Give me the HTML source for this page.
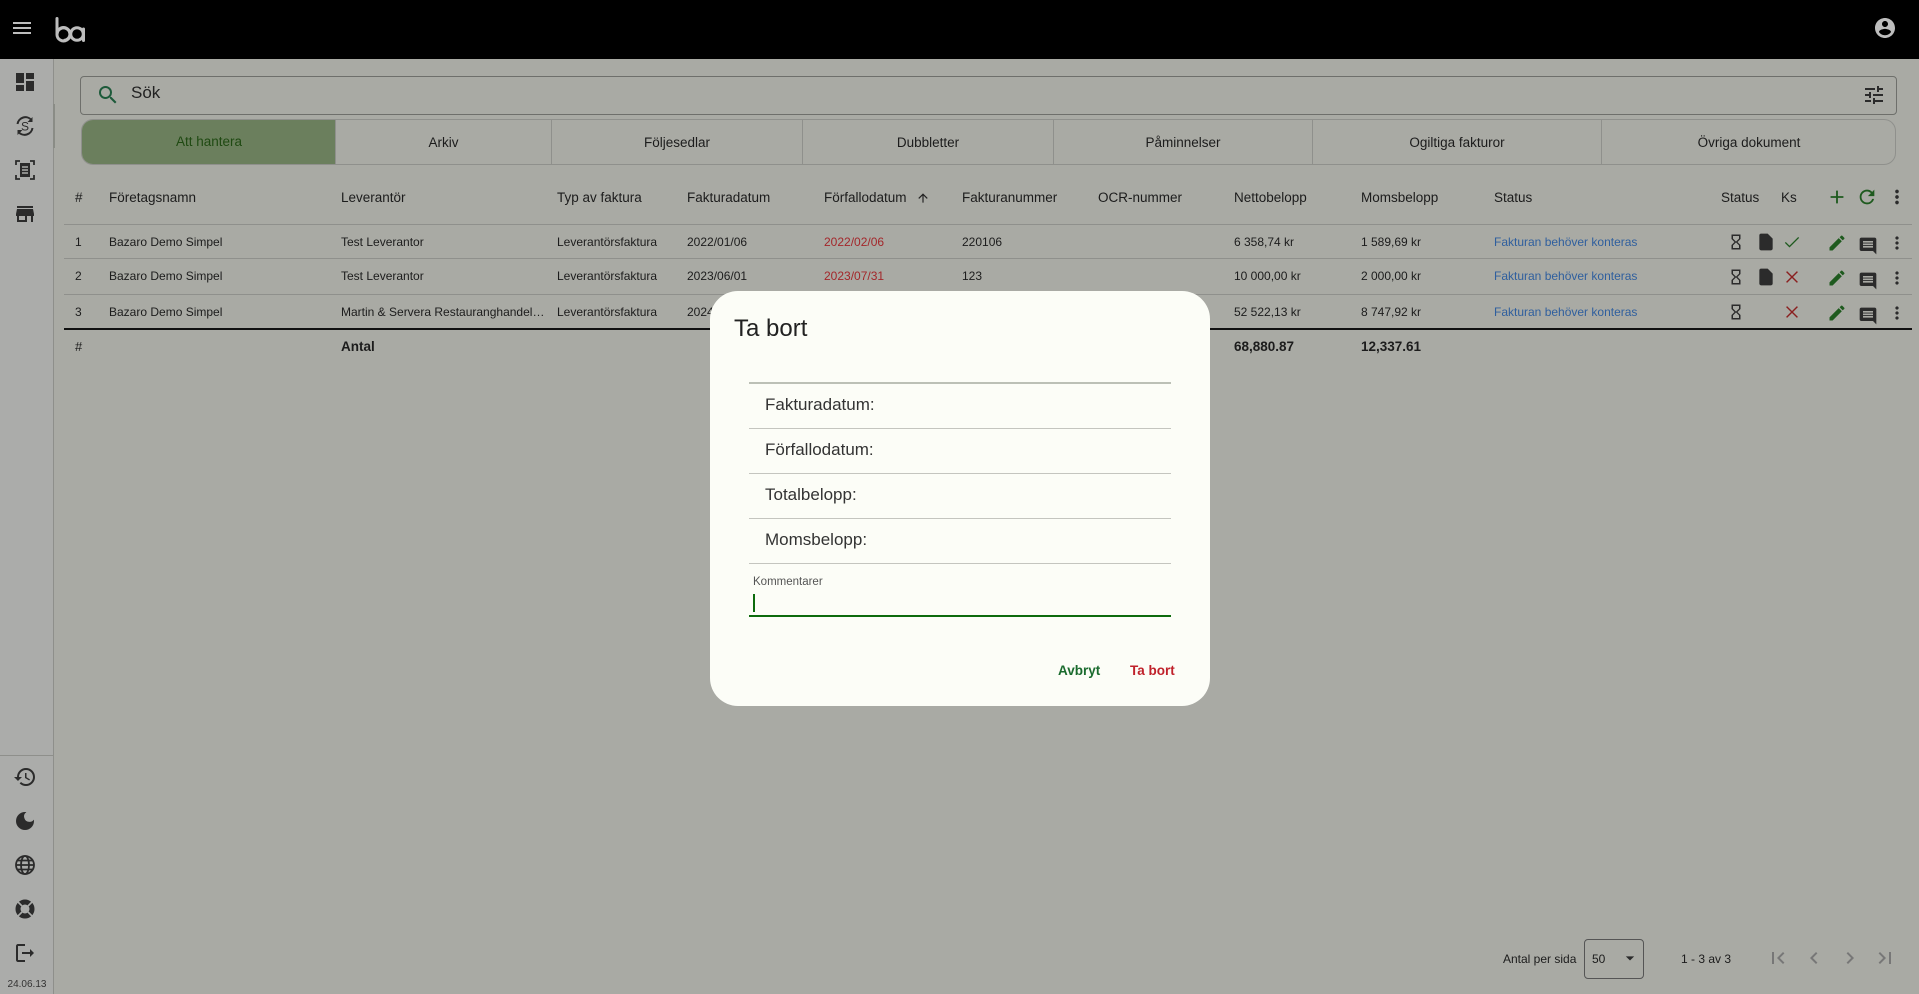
<!DOCTYPE html>
<html><head><meta charset="utf-8"><style>
*{box-sizing:border-box;margin:0;padding:0}
body{width:1919px;height:994px;overflow:hidden;background:#a9aaa4;font-family:"Liberation Sans",Arial,sans-serif;color:#1c1c1c;position:relative}
.a{position:absolute}
svg{display:block}
.hdr{left:0;top:0;width:1919px;height:59px;background:#000}
.side{left:0;top:59px;width:54px;height:935px;background:#abacaa;border-right:1px solid #8e8f8b}
.th{font-size:13.5px;top:190px;white-space:nowrap}
.td{font-size:12px;white-space:nowrap}
.line{height:1px;background:#8f908c;left:64px;width:1848px}
.tab{top:120px;height:45px;line-height:45px;text-align:center;font-size:13.5px;border-left:1px solid #8f908c}
.lab{left:765px;font-size:17px;color:#333}
.dl{left:749px;width:422px;height:1px;background:#c4c5bf}
</style></head><body>
<div class="a hdr"></div>
<svg class="a" style="left:10px;top:16px" width="24" height="24" viewBox="0 0 24 24"><path fill="#bdbdbd" d="M3 18h18v-2H3v2zm0-5h18v-2H3v2zm0-7v2h18V6H3z"/></svg>
<svg class="a" style="left:54px;top:17px" width="34" height="26" viewBox="0 0 34 26"><g fill="none" stroke="#bdbdbd" stroke-width="3"><path d="M3 1.5v16" stroke-linecap="round"/><path d="M3 17.5a6.5 6.5 0 1 0 0-0.1"/><path d="M3 17a6.5 6.5 0 0 1 13 0 6.5 6.5 0 0 1 -6.5 6.5"/><circle cx="23" cy="17" r="6.3"/><path d="M29.5 12v11.5" stroke-linecap="round"/></g></svg>
<svg class="a" style="left:1873px;top:16px" width="24" height="24" viewBox="0 0 24 24"><path fill="#bdbdbd" d="M12 2C6.48 2 2 6.48 2 12s4.48 10 10 10 10-4.48 10-10S17.52 2 12 2zm0 3c1.66 0 3 1.34 3 3s-1.34 3-3 3-3-1.34-3-3 1.34-3 3-3zm0 14.2c-2.5 0-4.71-1.28-6-3.22.03-1.99 4-3.08 6-3.08 1.99 0 5.970 1.09 6 3.08-1.29 1.94-3.5 3.22-6 3.22z"/></svg>

<div class="a side"></div>
<div class="a" style="left:53px;top:104px;width:2px;height:44px;background:#8a8c86"></div>
<svg class="a" style="left:13px;top:70px" width="24" height="24" viewBox="0 0 24 24"><path fill="#2b2b2b" d="M3 13h8V3H3v10zm0 8h8v-6H3v6zm10 0h8V11h-8v10zm0-18v6h8V3h-8z"/></svg>
<svg class="a" style="left:13px;top:114px" width="24" height="24" viewBox="0 0 24 24"><g fill="none" stroke="#2b2b2b" stroke-width="2"><path d="M4.5 10a8 8 0 0 1 14-4M19.5 14a8 8 0 0 1-14 4"/></g><path fill="#2b2b2b" d="M19.5 3v5h-5zM4.5 21v-5h5z"/><text x="12" y="16.5" text-anchor="middle" font-size="12" font-family="Liberation Sans" fill="#2b2b2b">S</text></svg>
<svg class="a" style="left:13px;top:158px" width="24" height="24" viewBox="0 0 24 24"><path fill="none" stroke="#2b2b2b" stroke-width="1.8" d="M3 7V3h4M17 3h4v4M21 17v4h-4M7 21H3v-4"/><rect x="7" y="5" width="10" height="14" fill="#2b2b2b"/><path stroke="#abacaa" stroke-width="1.4" d="M9 9h6M9 12h6M9 15h6"/></svg>
<svg class="a" style="left:13px;top:202px" width="24" height="24" viewBox="0 0 24 24"><path fill="#2b2b2b" d="M20 4H4v2h16V4zm1 10v-2l-1-5H4l-1 5v2h1v6h10v-6h4v6h2v-6h1zm-9 4H6v-4h6v4z"/></svg>
<div class="a" style="left:0;top:755px;width:54px;height:1px;background:#8e8f8b"></div>
<svg class="a" style="left:13px;top:765px" width="24" height="24" viewBox="0 0 24 24"><path fill="#2b2b2b" d="M13 3a9 9 0 00-9 9H1l3.89 3.89.07.14L9 12H6c0-3.87 3.13-7 7-7s7 3.13 7 7-3.13 7-7 7c-1.93 0-3.68-.79-4.94-2.06l-1.42 1.42A8.954 8.954 0 0013 21a9 9 0 000-18zm-1 5v5l4.28 2.54.72-1.21-3.5-2.08V8H12z"/></svg>
<svg class="a" style="left:13px;top:809px" width="24" height="24" viewBox="0 0 24 24"><path fill="#2b2b2b" d="M12 3a9 9 0 109 9c0-.46-.04-.92-.1-1.36a5.389 5.389 0 01-4.4 2.26 5.403 5.403 0 01-3.14-9.8c-.44-.06-.9-.1-1.36-.1z"/></svg>
<svg class="a" style="left:13px;top:853px" width="24" height="24" viewBox="0 0 24 24"><g fill="none" stroke="#2b2b2b" stroke-width="1.8"><circle cx="12" cy="12" r="9"/><ellipse cx="12" cy="12" rx="4" ry="9"/><path d="M3 12h18M4.5 7.5h15M4.5 16.5h15"/></g></svg>
<svg class="a" style="left:13px;top:897px" width="24" height="24" viewBox="0 0 24 24"><circle cx="12" cy="12" r="7" fill="none" stroke="#2b2b2b" stroke-width="5"/><path stroke="#abacaa" stroke-width="1.6" d="M5 5l4 4M19 5l-4 4M5 19l4-4M19 19l-4-4"/></svg>
<svg class="a" style="left:13px;top:941px" width="24" height="24" viewBox="0 0 24 24"><path fill="#2b2b2b" d="M5 5h7V3H5c-1.1 0-2 .9-2 2v14c0 1.1.9 2 2 2h7v-2H5V5zm16 7l-4-4v3H9v2h8v3l4-4z"/></svg>
<div class="a" style="left:0;top:979px;width:54px;text-align:center;font-size:10px;color:#333">24.06.13</div>

<div class="a" style="left:80px;top:76px;width:1817px;height:39px;border:1px solid #6e6f6b;border-radius:4px"></div>
<svg class="a" style="left:96px;top:83px" width="24" height="24" viewBox="0 0 24 24"><path fill="#1d5a3a" d="M15.5 14h-.79l-.28-.27A6.47 6.47 0 0016 9.5 6.5 6.5 0 109.5 16c1.610 0 3.09-.59 4.23-1.57l.27.28v.79l5 4.99L20.49 19l-4.99-5zm-6 0C7.01 14 5 11.99 5 9.5S7.01 5 9.5 5 14 7.01 14 9.5 11.99 14 9.5 14z"/></svg>
<div class="a" style="left:131px;top:83px;font-size:17px;color:#222">Sök</div>
<svg class="a" style="left:1862px;top:83px" width="24" height="24" viewBox="0 0 24 24"><path fill="#2b2b2b" d="M3 17v2h6v-2H3zM3 5v2h10V5H3zm10 16v-2h8v-2h-8v-2h-2v6h2zM7 9v2H3v2h4v2h2V9H7zm14 4v-2H11v2h10zm-6-4h2V7h4V5h-4V3h-2v6z"/></svg>

<div class="a" style="left:81px;top:119px;width:1815px;height:46px;border:1px solid #8f908c;border-radius:12px;overflow:hidden">
<div class="a" style="left:0;top:0;width:254px;height:46px;background:#6b7f5d;color:#1f4a12;text-align:center;line-height:44px;font-size:13.5px">Att hantera</div>
</div>
<div class="a tab" style="left:335px;width:216px">Arkiv</div>
<div class="a tab" style="left:551px;width:251px">Följesedlar</div>
<div class="a tab" style="left:802px;width:251px">Dubbletter</div>
<div class="a tab" style="left:1053px;width:259px">Påminnelser</div>
<div class="a tab" style="left:1312px;width:289px">Ogiltiga fakturor</div>
<div class="a tab" style="left:1601px;width:295px">Övriga dokument</div>

<div class="a th" style="left:75px">#</div>
<div class="a th" style="left:109px">Företagsnamn</div>
<div class="a th" style="left:341px">Leverantör</div>
<div class="a th" style="left:557px">Typ av faktura</div>
<div class="a th" style="left:687px">Fakturadatum</div>
<div class="a th" style="left:824px">Förfallodatum</div>
<svg class="a" style="left:916px;top:191px" width="14" height="14" viewBox="0 0 24 24"><path fill="#222" d="M4 12l1.41 1.41L11 7.83V20h2V7.83l5.58 5.59L20 12l-8-8-8 8z"/></svg>
<div class="a th" style="left:962px">Fakturanummer</div>
<div class="a th" style="left:1098px">OCR-nummer</div>
<div class="a th" style="left:1234px">Nettobelopp</div>
<div class="a th" style="left:1361px">Momsbelopp</div>
<div class="a th" style="left:1494px">Status</div>
<div class="a th" style="left:1721px">Status</div>
<div class="a th" style="left:1781px">Ks</div>
<svg class="a" style="left:1826px;top:186px" width="22" height="22" viewBox="0 0 24 24"><path fill="#1e5a1e" d="M19 13h-6v6h-2v-6H5v-2h6V5h2v6h6v2z"/></svg>
<svg class="a" style="left:1856px;top:186px" width="22" height="22" viewBox="0 0 24 24"><path fill="#1e5a1e" d="M17.65 6.35A7.958 7.958 0 0012 4c-4.42 0-7.990 3.58-7.99 8s3.57 8 7.99 8c3.730 0 6.84-2.55 7.73-6h-2.08A5.99 5.99 0 0112 18c-3.31 0-6-2.69-6-6s2.69-6 6-6c1.66 0 3.14.69 4.22 1.78L13 11h7V4l-2.35 2.35z"/></svg>
<svg class="a" style="left:1886px;top:186px" width="22" height="22" viewBox="0 0 24 24"><path fill="#2b2b2b" d="M12 8c1.1 0 2-.9 2-2s-.9-2-2-2-2 .9-2 2 .9 2 2 2zm0 2c-1.1 0-2 .9-2 2s.9 2 2 2 2-.9 2-2-.9-2-2-2zm0 6c-1.1 0-2 .9-2 2s.9 2 2 2 2-.9 2-2-.9-2-2-2z"/></svg>

<div class="a line" style="top:224px"></div>
<div class="a line" style="top:258px"></div>
<div class="a line" style="top:294px"></div>
<div class="a" style="left:64px;top:328px;width:1848px;height:2px;background:#111"></div>

<div class="a td" style="top:235px;left:75px">1</div><div class="a td" style="top:235px;left:109px">Bazaro Demo Simpel</div><div class="a td" style="top:235px;left:341px">Test Leverantor</div><div class="a td" style="top:235px;left:557px">Leverantörsfaktura</div><div class="a td" style="top:235px;left:687px">2022/01/06</div><div class="a td" style="top:235px;left:824px;color:#a3272b">2022/02/06</div><div class="a td" style="top:235px;left:962px">220106</div><div class="a td" style="top:235px;left:1234px">6 358,74 kr</div><div class="a td" style="top:235px;left:1361px">1 589,69 kr</div><div class="a td" style="top:235px;left:1494px;color:#2f5f9e">Fakturan behöver konteras</div>
<div class="a td" style="top:269px;left:75px">2</div><div class="a td" style="top:269px;left:109px">Bazaro Demo Simpel</div><div class="a td" style="top:269px;left:341px">Test Leverantor</div><div class="a td" style="top:269px;left:557px">Leverantörsfaktura</div><div class="a td" style="top:269px;left:687px">2023/06/01</div><div class="a td" style="top:269px;left:824px;color:#a3272b">2023/07/31</div><div class="a td" style="top:269px;left:962px">123</div><div class="a td" style="top:269px;left:1234px">10 000,00 kr</div><div class="a td" style="top:269px;left:1361px">2 000,00 kr</div><div class="a td" style="top:269px;left:1494px;color:#2f5f9e">Fakturan behöver konteras</div>
<div class="a td" style="top:305px;left:75px">3</div><div class="a td" style="top:305px;left:109px">Bazaro Demo Simpel</div><div class="a td" style="top:305px;left:341px;width:205px;overflow:hidden;text-overflow:ellipsis">Martin &amp; Servera Restauranghandel AB</div><div class="a td" style="top:305px;left:557px">Leverantörsfaktura</div><div class="a td" style="top:305px;left:687px">2024</div><div class="a td" style="top:305px;left:1234px">52 522,13 kr</div><div class="a td" style="top:305px;left:1361px">8 747,92 kr</div><div class="a td" style="top:305px;left:1494px;color:#2f5f9e">Fakturan behöver konteras</div>
<div class="a" style="top:339px;left:75px;font-size:13px">#</div>
<div class="a" style="top:339px;left:341px;font-size:13.5px;font-weight:bold">Antal</div>
<div class="a" style="top:339px;left:1234px;font-size:13.5px;font-weight:bold">68,880.87</div>
<div class="a" style="top:339px;left:1361px;font-size:13.5px;font-weight:bold">12,337.61</div>

<svg class="a" style="left:1727px;top:233px" width="18" height="18" viewBox="0 0 24 24"><path fill="#2b2b2b" d="M6 2v6h.01L6 8.01 10 12l-4 4 .01.01H6V22h12v-5.99h-.01L18 16l-4-4 4-3.99-.01-.01H18V2H6zm10 14.5V20H8v-3.5l4-4 4 4zm-4-5l-4-4V4h8v3.5l-4 4z"/></svg>
<svg class="a" style="left:1727px;top:268px" width="18" height="18" viewBox="0 0 24 24"><path fill="#2b2b2b" d="M6 2v6h.01L6 8.01 10 12l-4 4 .01.01H6V22h12v-5.99h-.01L18 16l-4-4 4-3.99-.01-.01H18V2H6zm10 14.5V20H8v-3.5l4-4 4 4zm-4-5l-4-4V4h8v3.5l-4 4z"/></svg>
<svg class="a" style="left:1727px;top:303px" width="18" height="18" viewBox="0 0 24 24"><path fill="#2b2b2b" d="M6 2v6h.01L6 8.01 10 12l-4 4 .01.01H6V22h12v-5.99h-.01L18 16l-4-4 4-3.99-.01-.01H18V2H6zm10 14.5V20H8v-3.5l4-4 4 4zm-4-5l-4-4V4h8v3.5l-4 4z"/></svg>
<svg class="a" style="left:1756px;top:232px" width="20" height="20" viewBox="0 0 24 24"><path fill="#2b2b2b" d="M6 2c-1.1 0-1.99.9-1.99 2L4 20c0 1.1.89 2 1.99 2H18c1.1 0 2-.9 2-2V8l-6-6H6z"/></svg>
<svg class="a" style="left:1756px;top:267px" width="20" height="20" viewBox="0 0 24 24"><path fill="#2b2b2b" d="M6 2c-1.1 0-1.99.9-1.99 2L4 20c0 1.1.89 2 1.99 2H18c1.1 0 2-.9 2-2V8l-6-6H6z"/></svg>
<svg class="a" style="left:1782px;top:232px" width="20" height="20" viewBox="0 0 24 24"><path fill="none" stroke="#1e5a1e" stroke-width="1.6" d="M4 12.5l5 5L20 6.5"/></svg>
<svg class="a" style="left:1782px;top:267px" width="20" height="20" viewBox="0 0 24 24"><path fill="none" stroke="#8a1f1f" stroke-width="1.7" d="M5.5 5.5l13 13M18.5 5.5l-13 13"/></svg>
<svg class="a" style="left:1782px;top:302px" width="20" height="20" viewBox="0 0 24 24"><path fill="none" stroke="#8a1f1f" stroke-width="1.7" d="M5.5 5.5l13 13M18.5 5.5l-13 13"/></svg>
<svg class="a" style="left:1827px;top:233px" width="20" height="20" viewBox="0 0 24 24"><path fill="#1e5a1e" d="M3 17.25V21h3.75L17.81 9.94l-3.75-3.75L3 17.25zM20.71 7.04a.996.996 0 000-1.41l-2.34-2.34a.996.996 0 00-1.41 0l-1.83 1.83 3.75 3.75 1.83-1.83z"/></svg>
<svg class="a" style="left:1827px;top:268px" width="20" height="20" viewBox="0 0 24 24"><path fill="#1e5a1e" d="M3 17.25V21h3.75L17.81 9.94l-3.75-3.75L3 17.25zM20.71 7.04a.996.996 0 000-1.41l-2.34-2.34a.996.996 0 00-1.41 0l-1.83 1.83 3.75 3.75 1.83-1.83z"/></svg>
<svg class="a" style="left:1827px;top:303px" width="20" height="20" viewBox="0 0 24 24"><path fill="#1e5a1e" d="M3 17.25V21h3.75L17.81 9.94l-3.75-3.75L3 17.25zM20.71 7.04a.996.996 0 000-1.41l-2.34-2.34a.996.996 0 00-1.41 0l-1.83 1.83 3.75 3.75 1.83-1.83z"/></svg>
<svg class="a" style="left:1858px;top:236px" width="20" height="20" viewBox="0 0 24 24"><path fill="#2b2b2b" d="M21.99 4c0-1.1-.89-2-1.99-2H4c-1.1 0-2 .9-2 2v12c0 1.1.9 2 2 2h14l4 4-.01-18zM18 14H6v-2h12v2zm0-3H6V9h12v2zm0-3H6V6h12v2z"/></svg>
<svg class="a" style="left:1858px;top:271px" width="20" height="20" viewBox="0 0 24 24"><path fill="#2b2b2b" d="M21.99 4c0-1.1-.89-2-1.99-2H4c-1.1 0-2 .9-2 2v12c0 1.1.9 2 2 2h14l4 4-.01-18zM18 14H6v-2h12v2zm0-3H6V9h12v2zm0-3H6V6h12v2z"/></svg>
<svg class="a" style="left:1858px;top:306px" width="20" height="20" viewBox="0 0 24 24"><path fill="#2b2b2b" d="M21.99 4c0-1.1-.89-2-1.99-2H4c-1.1 0-2 .9-2 2v12c0 1.1.9 2 2 2h14l4 4-.01-18zM18 14H6v-2h12v2zm0-3H6V9h12v2zm0-3H6V6h12v2z"/></svg>
<svg class="a" style="left:1887px;top:233px" width="20" height="20" viewBox="0 0 24 24"><path fill="#2b2b2b" d="M12 8c1.1 0 2-.9 2-2s-.9-2-2-2-2 .9-2 2 .9 2 2 2zm0 2c-1.1 0-2 .9-2 2s.9 2 2 2 2-.9 2-2-.9-2-2-2zm0 6c-1.1 0-2 .9-2 2s.9 2 2 2 2-.9 2-2-.9-2-2-2z"/></svg>
<svg class="a" style="left:1887px;top:268px" width="20" height="20" viewBox="0 0 24 24"><path fill="#2b2b2b" d="M12 8c1.1 0 2-.9 2-2s-.9-2-2-2-2 .9-2 2 .9 2 2 2zm0 2c-1.1 0-2 .9-2 2s.9 2 2 2 2-.9 2-2-.9-2-2-2zm0 6c-1.1 0-2 .9-2 2s.9 2 2 2 2-.9 2-2-.9-2-2-2z"/></svg>
<svg class="a" style="left:1887px;top:303px" width="20" height="20" viewBox="0 0 24 24"><path fill="#2b2b2b" d="M12 8c1.1 0 2-.9 2-2s-.9-2-2-2-2 .9-2 2 .9 2 2 2zm0 2c-1.1 0-2 .9-2 2s.9 2 2 2 2-.9 2-2-.9-2-2-2zm0 6c-1.1 0-2 .9-2 2s.9 2 2 2 2-.9 2-2-.9-2-2-2z"/></svg>

<div class="a" style="left:1503px;top:952px;font-size:12px">Antal per sida</div>
<div class="a" style="left:1584px;top:939px;width:60px;height:40px;border:1px solid #555;border-radius:4px"></div>
<div class="a" style="left:1592px;top:952px;font-size:12px">50</div>
<svg class="a" style="left:1620px;top:948px" width="20" height="20" viewBox="0 0 24 24"><path fill="#2b2b2b" d="M7 10l5 5 5-5z"/></svg>
<div class="a" style="left:1681px;top:952px;font-size:12px">1 - 3 av 3</div>
<svg class="a" style="left:1766px;top:946px" width="24" height="24" viewBox="0 0 24 24"><path fill="#777" d="M18.41 16.59L13.82 12l4.59-4.59L17 6l-6 6 6 6zM6 6h2v12H6z"/></svg>
<svg class="a" style="left:1802px;top:946px" width="24" height="24" viewBox="0 0 24 24"><path fill="#777" d="M15.41 7.41L14 6l-6 6 6 6 1.41-1.41L10.83 12z"/></svg>
<svg class="a" style="left:1838px;top:946px" width="24" height="24" viewBox="0 0 24 24"><path fill="#777" d="M10 6L8.59 7.41 13.17 12l-4.58 4.59L10 18l6-6z"/></svg>
<svg class="a" style="left:1873px;top:946px" width="24" height="24" viewBox="0 0 24 24"><path fill="#777" d="M5.59 7.41L10.18 12l-4.59 4.59L7 18l6-6-6-6zM16 6h2v12h-2z"/></svg>

<div class="a" style="left:710px;top:291px;width:500px;height:415px;background:#fcfdf7;border-radius:28px"></div>
<div class="a" style="left:734px;top:315px;font-size:24px;color:#222">Ta bort</div>
<div class="a dl" style="top:382px;height:2px;background:#bcc0b6"></div>
<div class="a lab" style="top:395px">Fakturadatum:</div>
<div class="a dl" style="top:428px"></div>
<div class="a lab" style="top:440px">Förfallodatum:</div>
<div class="a dl" style="top:473px"></div>
<div class="a lab" style="top:485px">Totalbelopp:</div>
<div class="a dl" style="top:518px"></div>
<div class="a lab" style="top:530px">Momsbelopp:</div>
<div class="a dl" style="top:563px"></div>
<div class="a" style="left:753px;top:576px;font-size:11.5px;color:#555">Kommentarer</div>
<div class="a" style="left:753px;top:594px;width:2px;height:18px;background:#0d6b0d"></div>
<div class="a" style="left:749px;top:615px;width:422px;height:2px;background:#0d6b0d"></div>
<div class="a" style="left:1058px;top:663px;font-size:13.5px;color:#1a6b2e;font-weight:bold">Avbryt</div>
<div class="a" style="left:1130px;top:663px;font-size:13.5px;color:#c0212b;font-weight:bold">Ta bort</div>
</body></html>
